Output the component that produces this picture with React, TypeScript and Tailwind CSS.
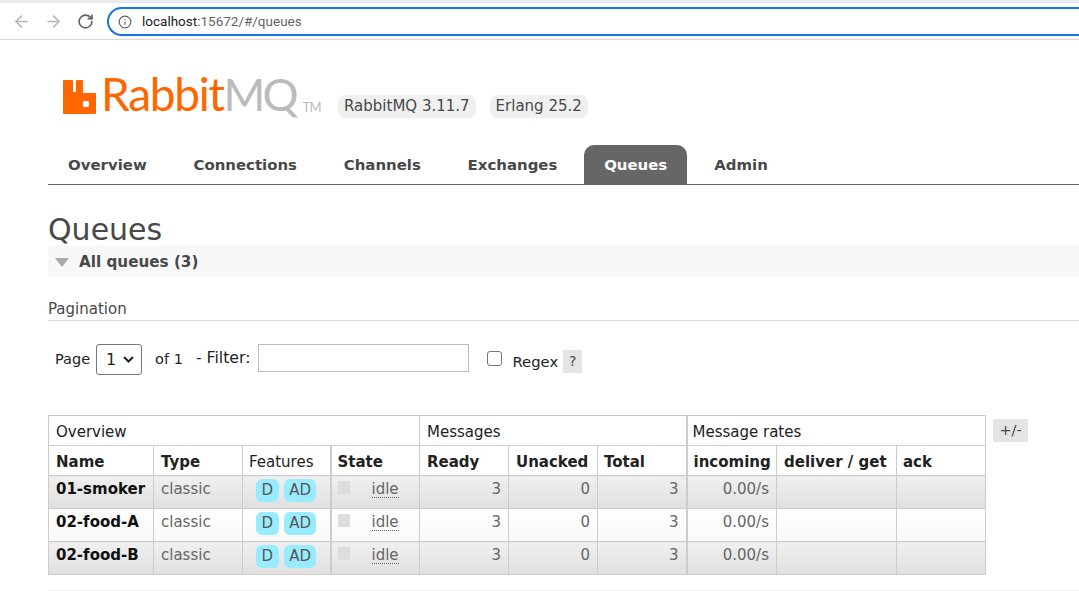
import React from 'react';
import { ArrowLeft, ArrowRight, RotateCw, Info } from 'lucide-react';

const FONT = "font-['DejaVu_Sans',Verdana,sans-serif]";

const TABS = ['Overview', 'Connections', 'Channels', 'Exchanges', 'Queues', 'Admin'];

const QUEUES = [
  { name: '01-smoker', odd: true },
  { name: '02-food-A', odd: false },
  { name: '02-food-B', odd: true },
];

const Logo = () => (
  <div className="flex items-end h-[44px] w-[257px] font-['Lato',sans-serif]">
    <svg width="33" height="34" viewBox="0 0 33 34" className="mb-[1px] shrink-0">
      <path
        d="M0 1Q0 0 1 0H9Q10 0 10 1V12H13V1Q13 0 14 0H19Q20 0 20 1V13H32Q33 13 33 14V33Q33 34 32 34H1Q0 34 0 33Z"
        fill="#ff6600"
      />
      <rect x="20" y="21" width="6" height="6" rx="1" fill="#fff" />
    </svg>
    <span className="ml-[5px] text-[46px] leading-[44px] tracking-[-1.3px] font-normal text-[#ff6600] mb-[-1px]">Rabbit</span>
    <span className="text-[45px] leading-[44px] tracking-[-3px] font-normal text-[#bbbbbb] mb-[-1px]">MQ</span>
    <span className="ml-[7px] mb-[1px] text-[13px] leading-[14px] tracking-[-0.5px] text-[#bbbbbb]">TM</span>
  </div>
);

const Badge = ({ children }: { children: React.ReactNode }) => (
  <span className="inline-block h-[23px] leading-[23px] px-[6px] rounded-[7px] bg-[#f0f0f0] text-[15px] text-[#484848]">
    {children}
  </span>
);

const Feature = ({ children }: { children: React.ReactNode }) => (
  <span className="inline-block h-[23px] leading-[23px] px-[5.5px] rounded-[6px] bg-[#99ebff] text-[#555] text-[15px]">
    {children}
  </span>
);

const cellBorder = 'border border-[#cccccc]';

const App = () => {
  return (
    <div className={`${FONT} w-[1079px] h-[591px] overflow-hidden bg-white text-[#484848]`}>
      {/* browser toolbar */}
      <div className="h-[3px] bg-[#e8eaed]" />
      <div className="h-[37px] flex items-center border-b border-[#d8d8d8]">
        <ArrowLeft size={19} className="ml-[12px] text-[#b5b5b5]" />
        <ArrowRight size={19} className="ml-[13px] text-[#b5b5b5]" />
        <RotateCw size={17} strokeWidth={2.4} className="ml-[14px] text-[#5f6368]" />
        <div className="ml-[13px] flex-1 h-[29px] mt-[1px] flex items-center rounded-l-full border-2 border-r-0 border-[#1a73e8] font-['Roboto',sans-serif] text-[13.5px]">
          <Info size={14} className="ml-[9px] text-[#5f6368]" />
          <span className="ml-[10px] text-[#222]">localhost</span>
          <span className="text-[#5f6368]">:15672/#/queues</span>
        </div>
      </div>

      {/* header */}
      <div className="ml-[48px]">
        <div className="h-[71px] pt-[31px] pl-[15px] flex items-start">
          <Logo />
          <div className="ml-[18px] mt-[24px] flex gap-[14px]">
            <Badge>RabbitMQ 3.11.7</Badge>
            <Badge>Erlang 25.2</Badge>
          </div>
        </div>
        <div className="mt-[34px] h-[40px] flex border-b border-[#666666] text-[14.95px] font-bold text-[#484848]">
          {TABS.map((tab) => (
            <div
              key={tab}
              className={
                tab === 'Queues'
                  ? 'h-[39px] leading-[41px] px-[20px] mr-[7px] rounded-t-[10px] bg-[#666666] text-white'
                  : 'h-[39px] leading-[41px] pl-[20px] pr-[26.75px] last:pr-0'
              }
            >
              {tab}
            </div>
          ))}
        </div>

        {/* page title */}
        <h1 className="mt-[26px] h-[35px] text-[30px] leading-[37px] text-[#484848]">Queues</h1>
        <div className="h-[31px] flex items-center bg-[#f8f8f8] pl-[7px] text-[15.2px] font-bold">
          <span className="w-0 h-0 border-x-[7px] border-x-transparent border-t-[9px] border-t-[#aaaaaa] mt-[1px]" />
          <span className="ml-[10px] mt-[2px]">All queues (3)</span>
        </div>

        {/* pagination */}
        <div className="mt-[21px] h-[23px] leading-[22px] text-[15px] border-b border-[#dddddd]">Pagination</div>
        <div className="mt-[23px] h-[31px] flex items-center text-[14.5px] text-[#222]">
          <span className="ml-[7px]">Page</span>
          <span className="ml-[6px] w-[46px] h-[31px] flex items-center justify-between pl-[9px] pr-[7px] border border-[#767676] rounded-[3px] bg-white text-[16px]">
            1
            <svg width="11" height="7" viewBox="0 0 11 7">
              <path d="M1 1L5.5 5.5L10 1" fill="none" stroke="#222" strokeWidth="2" />
            </svg>
          </span>
          <span className="ml-[13px]">of 1</span>
          <span className="ml-[13px] mt-[-4px] text-[15.7px]">- Filter:</span>
          <span className="ml-[8px] mt-[-4px] w-[211px] h-[28px] border border-[#bbbbbb] bg-white" />
          <span className="ml-[18px] w-[15px] h-[15px] mt-[-3px] rounded-[3px] border border-[#767676] bg-white" />
          <span className="ml-[10px] mt-[4px] leading-[20px] text-[14.8px]">Regex</span>
          <span className="ml-[5px] mt-[4px] w-[19px] h-[23px] leading-[23px] text-center bg-[#e4e4e4] text-[#484848] text-[14px]">?</span>
        </div>

        {/* queues table */}
        <div className="mt-[40px] flex items-start">
          <table className="w-[938px] table-fixed border-collapse border border-[#cccccc] text-[15px] text-[#222]">
            <colgroup>
              <col className="w-[105px]" />
              <col className="w-[89px]" />
              <col className="w-[88px]" />
              <col className="w-[89px]" />
              <col className="w-[89px]" />
              <col className="w-[89px]" />
              <col className="w-[89px]" />
              <col className="w-[90px]" />
              <col className="w-[120px]" />
              <col className="w-[89px]" />
            </colgroup>
            <thead>
              <tr className="h-[30px]">
                <th colSpan={4} className={`${cellBorder} text-left font-normal px-[7px] pt-[4px]`}>Overview</th>
                <th colSpan={3} className={`${cellBorder} text-left font-normal px-[7px] pt-[4px]`}>Messages</th>
                <th colSpan={3} className={`${cellBorder} border-l-2 text-left font-normal px-[5px] pt-[4px]`}>Message rates</th>
              </tr>
              <tr className="h-[30px]">
                <th className={`${cellBorder} text-left px-[7px] pt-[4px]`}>Name</th>
                <th className={`${cellBorder} text-left px-[7px] pt-[4px]`}>Type</th>
                <th className={`${cellBorder} text-left font-normal px-[6px] pt-[4px]`}>Features</th>
                <th className={`${cellBorder} border-l-2 text-left px-[6px] pt-[4px]`}>State</th>
                <th className={`${cellBorder} text-left px-[7px] pt-[4px]`}>Ready</th>
                <th className={`${cellBorder} text-left px-[7px] pt-[4px]`}>Unacked</th>
                <th className={`${cellBorder} text-left px-[6px] pt-[4px]`}>Total</th>
                <th className={`${cellBorder} border-l-2 text-left px-[6px] pt-[4px]`}>incoming</th>
                <th className={`${cellBorder} text-left px-[7px] pt-[4px] whitespace-nowrap`}>deliver / get</th>
                <th className={`${cellBorder} text-left px-[6px] pt-[4px]`}>ack</th>
              </tr>
            </thead>
            <tbody>
              {QUEUES.map((q) => {
                const bg = q.odd
                  ? 'bg-gradient-to-b from-[#f0f0f0] to-[#e0e0e0]'
                  : 'bg-gradient-to-b from-[#ffffff] to-[#f8f8f8]';
                const base = `${cellBorder} ${bg} align-top`;
                const cell = `${base} text-[#666666]`;
                const num = `${cell} text-right pr-[7px] pt-[2px]`;
                return (
                  <tr key={q.name} className="h-[33px]">
                    <td className={`${base} px-[7px] pt-[2px] font-bold text-[#111] whitespace-nowrap`}>{q.name}</td>
                    <td className={`${cell} px-[7px] pt-[2px]`}>classic</td>
                    <td className={`${cell} pt-[2px] text-center`}>
                      <span className="inline-flex gap-[5px] mt-[1px]">
                        <Feature>D</Feature>
                        <Feature>AD</Feature>
                      </span>
                    </td>
                    <td className={`${cell} border-l-2 pt-[2px] pl-[6px]`}>
                      <div className="flex items-start">
                        <span className="w-[12px] h-[13px] mt-[3px] bg-[#dddddd] shrink-0" />
                        <span className="ml-[22px] leading-[22px] border-b border-dotted border-[#666666] h-[20px]">idle</span>
                      </div>
                    </td>
                    <td className={num}>3</td>
                    <td className={num}>0</td>
                    <td className={num}>3</td>
                    <td className={`${num} border-l-2`}>0.00/s</td>
                    <td className={cell} />
                    <td className={cell} />
                  </tr>
                );
              })}
            </tbody>
          </table>
          <span className="ml-[7px] mt-[4px] w-[35px] h-[23px] leading-[23px] text-center bg-[#e4e4e4] text-[14.5px] text-[#484848]">+/-</span>
        </div>
        <div className="mt-[15px] border-t border-[#f0f0f0]" />
      </div>
    </div>
  );
};

export default App;
